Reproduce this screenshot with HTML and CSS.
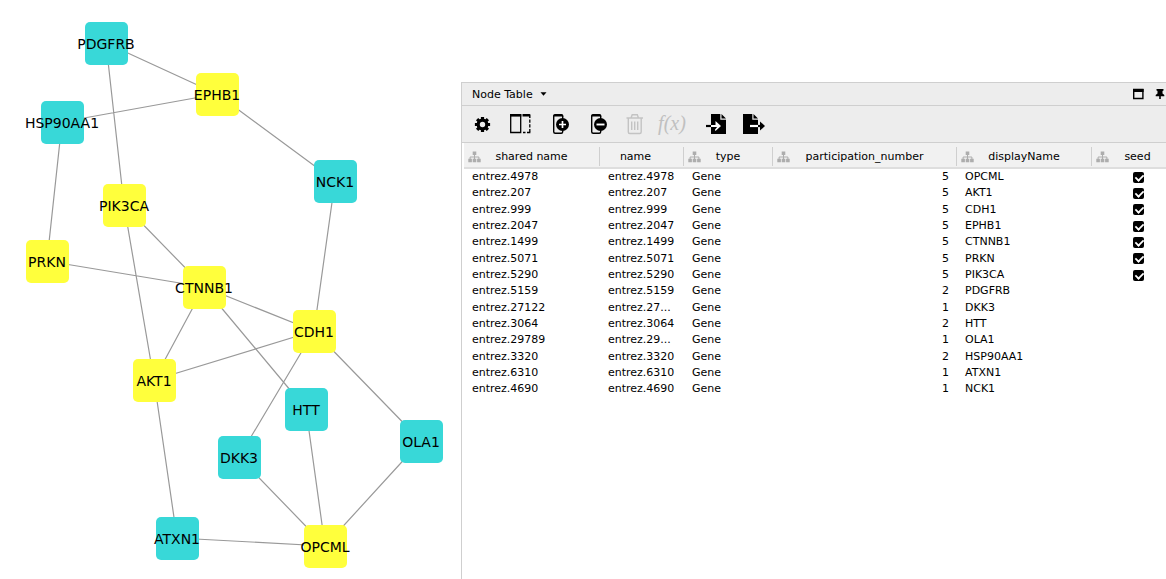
FILE: index.html
```html
<!DOCTYPE html>
<html lang="en">
<head>
<meta charset="utf-8">
<title>Node Table</title>
<link rel="stylesheet" href="styles.css">
</head>
<body>
<main class="workspace">
  <svg class="network" width="461" height="579" role="img" aria-label="Gene network">
    <g class="edges">
      <path d="M106 43L217 94M106 43L124 205M62 122L217 94M62 122L47 261M217 94L335 181M335 181L314 331M124 205L204 287M124 205L154 380M47 261L204 287M204 287L314 331M204 287L306 409M204 287L154 380M314 331L154 380M314 331L239 457M314 331L421 441M306 409L325 546M239 457L325 546M421 441L325 546M177 538L325 546M154 380L177 538"/>
    </g>
    <g class="nodes">
      <g class="gene" transform="translate(85 22)"><rect width="43" height="43" rx="5"/><text x="21" y="27">PDGFRB</text></g>
      <g class="seed-gene" transform="translate(196 73)"><rect width="43" height="43" rx="5"/><text x="21" y="27">EPHB1</text></g>
      <g class="gene" transform="translate(41 101)"><rect width="43" height="43" rx="5"/><text x="21" y="27">HSP90AA1</text></g>
      <g class="gene" transform="translate(314 160)"><rect width="43" height="43" rx="5"/><text x="21" y="27">NCK1</text></g>
      <g class="seed-gene" transform="translate(103 184)"><rect width="43" height="43" rx="5"/><text x="21" y="27">PIK3CA</text></g>
      <g class="seed-gene" transform="translate(26 240)"><rect width="43" height="43" rx="5"/><text x="21" y="27">PRKN</text></g>
      <g class="seed-gene" transform="translate(183 266)"><rect width="43" height="43" rx="5"/><text x="21" y="27">CTNNB1</text></g>
      <g class="seed-gene" transform="translate(293 310)"><rect width="43" height="43" rx="5"/><text x="21" y="27">CDH1</text></g>
      <g class="seed-gene" transform="translate(133 359)"><rect width="43" height="43" rx="5"/><text x="21" y="27">AKT1</text></g>
      <g class="gene" transform="translate(285 388)"><rect width="43" height="43" rx="5"/><text x="21" y="27">HTT</text></g>
      <g class="gene" transform="translate(218 436)"><rect width="43" height="43" rx="5"/><text x="21" y="27">DKK3</text></g>
      <g class="gene" transform="translate(400 420)"><rect width="43" height="43" rx="5"/><text x="21" y="27">OLA1</text></g>
      <g class="gene" transform="translate(156 517)"><rect width="43" height="43" rx="5"/><text x="21" y="27">ATXN1</text></g>
      <g class="seed-gene" transform="translate(304 525)"><rect width="43" height="43" rx="5"/><text x="21" y="27">OPCML</text></g>
    </g>
  </svg>

  <section class="panel">
    <svg class="symbols" aria-hidden="true">
      <symbol id="tree" viewBox="0 0 13 12">
        <path d="M4.7 0.5h3.6v3.6H4.7zM0.3 7.8h3.6v3.4H0.3zM4.7 7.8h3.6v3.4H4.7zM9.1 7.8h3.6v3.4H9.1z" fill="#adadad"/>
        <path d="M6.5 4v4M2.1 8V6h8.8v2" fill="none" stroke="#adadad"/>
      </symbol>
    </svg>

    <header class="title-bar">
      <button class="title-button" type="button">Node Table
        <svg width="7" height="4" viewBox="0 0 7 4"><path d="M0.5 0.3h6L3.5 3.7z"/></svg>
      </button>
      <div class="window-buttons">
        <button class="window-button" type="button" aria-label="Maximize">
          <svg width="12" height="12" viewBox="0 0 12 12"><path d="M1.7 1.5h9.2v9H1.7z" fill="none" stroke="#000" stroke-width="1.4"/><path d="M1 1h10.6v3H1z"/></svg>
        </button>
        <button class="window-button" type="button" aria-label="Pin">
          <svg width="10" height="12" viewBox="0 0 10 12"><path d="M1.5 1h7v1.5l-1 .4v2.6L9.3 7v1.2H5.800V11H4.200V8.200H.7V7l1.8-1.500V2.900l-1-.4z"/></svg>
        </button>
      </div>
    </header>

    <div class="toolbar">
      <button class="tool" type="button" aria-label="Options">
        <svg width="38" height="36" viewBox="0 0 38 36">
          <g fill="none" stroke="#000"><circle cx="19.500" cy="18.500" r="4.300" stroke-width="3.200"/>
          <path stroke-width="3.200" d="M19.500 10.900v3M19.500 23v3.100M11.900 18.500h3M24 18.500h3.100M14.100 13.100l2 2M22.900 21.900l2 2M24.900 13.100l-2 2M16.100 21.900l-2 2"/></g>
        </svg>
      </button>
      <button class="tool" type="button" aria-label="Columns">
        <svg width="38" height="36" viewBox="0 0 38 36">
          <path d="M9.700 9h10v17.500h-10z" fill="none" stroke="#000" stroke-width="1.300"/><path d="M9 8h11.300v2.600H9z"/>
          <path d="M21.500 8h7q1 0 1 1v3h-1.400v-1.500h-6.600z"/>
          <path d="M28.800 13.500v12.500" fill="none" stroke="#000" stroke-width="1.300" stroke-dasharray="3.200 1.500"/>
          <path d="M22 26.500h2.500M26 26.500h3.400" fill="none" stroke="#000" stroke-width="1.300"/>
        </svg>
      </button>
      <button class="tool" type="button" aria-label="Add column">
        <svg width="38" height="36" viewBox="0 0 38 36">
          <rect x="14.700" y="9" width="9" height="18.300" rx="1.500" fill="none" stroke="#000" stroke-width="1.400"/><path d="M14 10.500q0-2.500 2-2.500h6.500q2 0 2 2.500z"/>
          <circle cx="23.500" cy="18.500" r="6.500"/><path d="M23.500 15v7M20 18.500h7" stroke="#fff" stroke-width="1.700"/>
        </svg>
      </button>
      <button class="tool" type="button" aria-label="Remove column">
        <svg width="38" height="36" viewBox="0 0 38 36">
          <rect x="14.700" y="9" width="9" height="18.300" rx="1.500" fill="none" stroke="#000" stroke-width="1.400"/><path d="M14 10.500q0-2.500 2-2.500h6.500q2 0 2 2.500z"/>
          <circle cx="23.500" cy="18.500" r="6.500"/><path d="M19.500 18.500h8" stroke="#fff" stroke-width="1.900"/>
        </svg>
      </button>
      <button class="tool" type="button" aria-label="Delete" disabled>
        <svg width="38" height="36" viewBox="0 0 38 36">
          <g fill="none" stroke="#c3c3c3" stroke-width="1.400"><path d="M11.500 12h16.500M16 12l1.200-3.200h5.100L23.500 12M13.300 12v14q0 1.500 1.500 1.500h9.900q1.500 0 1.500-1.500V12"/><path d="M16.700 15.500v8.500M19.700 15.500v8.500M22.700 15.500v8.500"/></g>
        </svg>
      </button>
      <button class="tool tool-formula" type="button" disabled>f(x)</button>
      <button class="tool tool-import" type="button" aria-label="Import table">
        <svg width="38" height="36" viewBox="0 0 38 36">
          <path d="M14 8h9.300v5.700H29V28H14zM24.500 8L29 12.500h-4.500z"/>
          <path d="M9 20h5" stroke="#000" stroke-width="2.200"/>
          <path d="M14 18.900h4.500v-4l5.500 5.100l-5.500 5.100l-.6-1.400l2.200-2.600H14z" fill="#fff"/>
        </svg>
      </button>
      <button class="tool" type="button" aria-label="Export table">
        <svg width="38" height="36" viewBox="0 0 38 36">
          <path d="M8 8h9.300v5.700H23V28H8zM18.500 8L23 12.500h-4.500z"/>
          <path d="M15 20h8" stroke="#fff" stroke-width="2.200"/>
          <path d="M23 20h4" stroke="#000" stroke-width="2.200"/><path d="M25 15.500L30 20l-5 4.500z"/>
        </svg>
      </button>
    </div>

    <div class="table-wrap">
      <table class="node-table">
        <colgroup><col class="col-shared"><col class="col-name"><col class="col-type"><col class="col-number"><col class="col-display"><col class="col-seed"></colgroup>
        <thead>
          <tr>
            <th scope="col"><div class="head"><svg width="13" height="12"><use href="#tree"/></svg><span>shared name</span></div></th>
            <th scope="col"><div class="head head-plain"><span>name</span></div></th>
            <th scope="col"><div class="head"><svg width="13" height="12"><use href="#tree"/></svg><span>type</span></div></th>
            <th scope="col"><div class="head"><svg width="13" height="12"><use href="#tree"/></svg><span>participation_number</span></div></th>
            <th scope="col"><div class="head"><svg width="13" height="12"><use href="#tree"/></svg><span>displayName</span></div></th>
            <th scope="col"><div class="head"><svg width="13" height="12"><use href="#tree"/></svg><span>seed</span></div></th>
          </tr>
        </thead>
        <tbody>
          <tr><td>entrez.4978</td><td>entrez.4978</td><td>Gene</td><td class="number">5</td><td>OPCML</td><td class="seed"><input type="checkbox" aria-label="OPCML seed" checked></td></tr>
          <tr><td>entrez.207</td><td>entrez.207</td><td>Gene</td><td class="number">5</td><td>AKT1</td><td class="seed"><input type="checkbox" aria-label="AKT1 seed" checked></td></tr>
          <tr><td>entrez.999</td><td>entrez.999</td><td>Gene</td><td class="number">5</td><td>CDH1</td><td class="seed"><input type="checkbox" aria-label="CDH1 seed" checked></td></tr>
          <tr><td>entrez.2047</td><td>entrez.2047</td><td>Gene</td><td class="number">5</td><td>EPHB1</td><td class="seed"><input type="checkbox" aria-label="EPHB1 seed" checked></td></tr>
          <tr><td>entrez.1499</td><td>entrez.1499</td><td>Gene</td><td class="number">5</td><td>CTNNB1</td><td class="seed"><input type="checkbox" aria-label="CTNNB1 seed" checked></td></tr>
          <tr><td>entrez.5071</td><td>entrez.5071</td><td>Gene</td><td class="number">5</td><td>PRKN</td><td class="seed"><input type="checkbox" aria-label="PRKN seed" checked></td></tr>
          <tr><td>entrez.5290</td><td>entrez.5290</td><td>Gene</td><td class="number">5</td><td>PIK3CA</td><td class="seed"><input type="checkbox" aria-label="PIK3CA seed" checked></td></tr>
          <tr><td>entrez.5159</td><td>entrez.5159</td><td>Gene</td><td class="number">2</td><td>PDGFRB</td><td></td></tr>
          <tr><td>entrez.27122</td><td>entrez.27...</td><td>Gene</td><td class="number">1</td><td>DKK3</td><td></td></tr>
          <tr><td>entrez.3064</td><td>entrez.3064</td><td>Gene</td><td class="number">2</td><td>HTT</td><td></td></tr>
          <tr><td>entrez.29789</td><td>entrez.29...</td><td>Gene</td><td class="number">1</td><td>OLA1</td><td></td></tr>
          <tr><td>entrez.3320</td><td>entrez.3320</td><td>Gene</td><td class="number">2</td><td>HSP90AA1</td><td></td></tr>
          <tr><td>entrez.6310</td><td>entrez.6310</td><td>Gene</td><td class="number">1</td><td>ATXN1</td><td></td></tr>
          <tr><td>entrez.4690</td><td>entrez.4690</td><td>Gene</td><td class="number">1</td><td>NCK1</td><td></td></tr>
        </tbody>
      </table>
    </div>
  </section>
</main>
</body>
</html>
```

FILE: styles.css
```css
* {
  box-sizing: border-box;
}

body {
  margin: 0;
  background: #fff;
  color: #000;
  font-family: "DejaVu Sans", sans-serif;
  font-size: 11px;
}

button {
  display: flex;
  align-items: center;
  padding: 0;
  border: 0;
  background: none;
  color: inherit;
  font: inherit;
}

svg {
  display: block;
}

.workspace {
  display: flex;
  min-height: 100vh;
}

/* Network view */
.network {
  flex: none;
}

.edges path {
  fill: none;
  stroke: #999;
  stroke-width: 1.2;
}

.nodes text {
  fill: #000;
  font-size: 14px;
  text-anchor: middle;
}

.gene rect {
  fill: #38d8d8;
}

.seed-gene rect {
  fill: #ffff3c;
}

/* Table panel */
.panel {
  flex: 1;
  min-width: 0;
  margin-top: 82px;
  border-top: 1px solid #cfcfcf;
  border-left: 1px solid #cfcfcf;
  overflow: hidden;
}

.symbols {
  display: none;
}

.title-bar {
  display: flex;
  align-items: center;
  justify-content: space-between;
  height: 23px;
  padding: 0 1px 0 10px;
  border-bottom: 1px solid #cfcfcf;
  background: #ededed;
}

.title-button {
  gap: 7px;
}

.window-buttons {
  display: flex;
  gap: 11px;
}

.toolbar {
  display: flex;
  padding-left: 1px;
  border-bottom: 1px solid #cfcfcf;
  background: #ededed;
}

.tool {
  justify-content: center;
  width: 38px;
  height: 36px;
}

.tool-formula {
  padding-bottom: 2px;
  color: #c0c0c0;
  font-family: "Liberation Serif", serif;
  font-size: 20px;
  font-style: italic;
}

.tool-import {
  margin-left: 6px;
}

.table-wrap {
  padding-left: 2px;
}

.node-table {
  width: 720px;
  table-layout: fixed;
  border-collapse: separate;
  border-spacing: 0;
}

.col-shared {
  width: 136px;
}

.col-name {
  width: 84px;
}

.col-type {
  width: 89px;
}

.col-number {
  width: 184px;
}

.col-display {
  width: 135px;
}

.col-seed {
  width: 92px;
}

th {
  height: 26px;
  padding: 4px 0 1px;
  border-bottom: 2px solid #dedede;
  background: #f1f1f1;
  font-weight: normal;
}

.head {
  display: grid;
  grid-template-columns: 13px 1fr 13px;
  align-items: center;
  height: 19px;
  padding: 0 4px;
  border-right: 1px solid #cfcfcf;
}

.head-plain {
  grid-template-columns: 1fr;
  padding-right: 16px;
}

td {
  height: 16px;
  padding: 0 8px;
  line-height: 16px;
  white-space: nowrap;
}

tr:nth-child(3n) td {
  height: 17px;
}

.number {
  text-align: right;
}

.seed {
  text-align: center;
}

.seed input {
  display: block;
  width: 11px;
  height: 11px;
  margin: 0 auto;
  border-radius: 2px;
  background: #000;
  appearance: none;
}

.seed input::after {
  content: "";
  display: block;
  width: 7px;
  height: 4px;
  border-bottom: 2px solid #fff;
  border-left: 2px solid #fff;
  transform: translate(2px, 2px) rotate(-45deg) scale(0.9);
}
```
